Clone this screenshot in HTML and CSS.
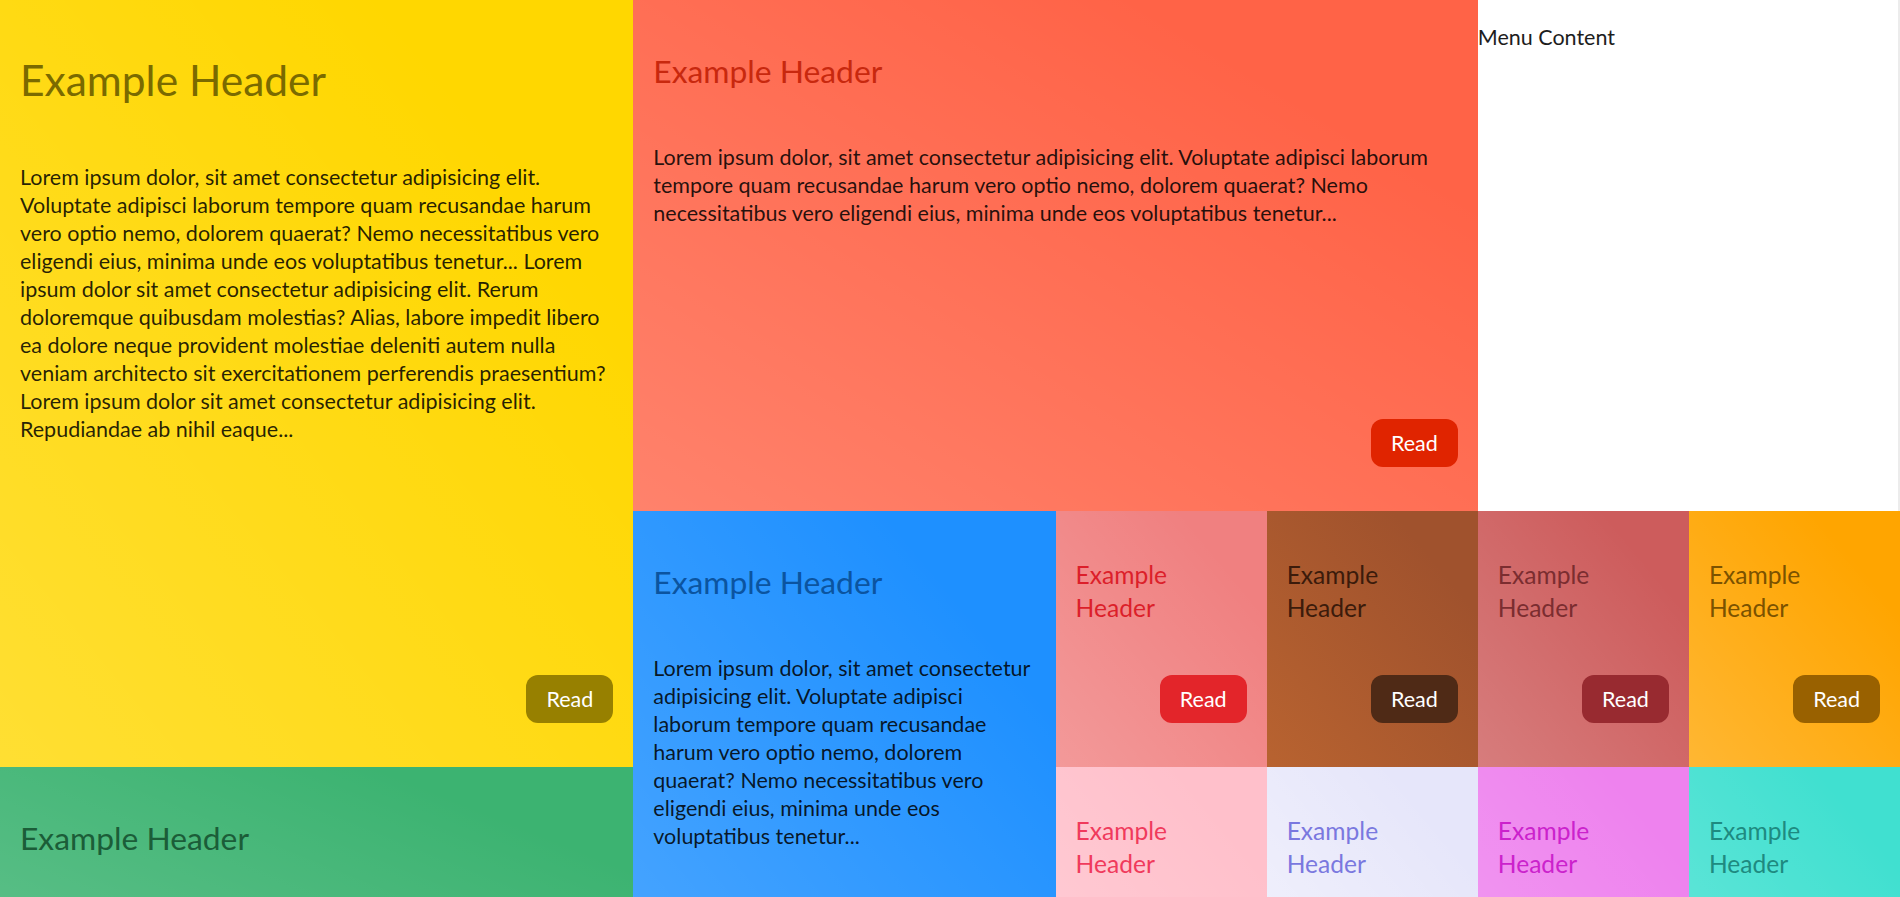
FILE: index.html
```html
<!DOCTYPE html>
<html lang="en">
<head>
<meta charset="utf-8">
<title>Bento Grid</title>
<link rel="stylesheet" href="styles.css">
</head>
<body>
<main class="grid">
  <article class="card card-gold span-big">
    <h1 class="title-xl">Example Header</h1>
    <p class="text">Lorem ipsum dolor, sit amet consectetur adipisicing elit. Voluptate adipisci laborum tempore quam recusandae harum vero optio nemo, dolorem quaerat? Nemo necessitatibus vero eligendi eius, minima unde eos voluptatibus tenetur... Lorem ipsum dolor sit amet consectetur adipisicing elit. Rerum doloremque quibusdam molestias? Alias, labore impedit libero ea dolore neque provident molestiae deleniti autem nulla veniam architecto sit exercitationem perferendis praesentium? Lorem ipsum dolor sit amet consectetur adipisicing elit. Repudiandae ab nihil eaque...</p>
    <button class="btn btn-gold">Read</button>
  </article>

  <article class="card card-tomato span-wide">
    <h2 class="title-lg">Example Header</h2>
    <p class="text">Lorem ipsum dolor, sit amet consectetur adipisicing elit. Voluptate adipisci laborum tempore quam recusandae harum vero optio nemo, dolorem quaerat? Nemo necessitatibus vero eligendi eius, minima unde eos voluptatibus tenetur...</p>
    <button class="btn btn-tomato">Read</button>
  </article>

  <aside class="menu span-menu">
    <p class="menu-text">Menu Content</p>
  </aside>

  <article class="card card-blue span-tall">
    <h2 class="title-lg">Example Header</h2>
    <p class="text">Lorem ipsum dolor, sit amet consectetur adipisicing elit. Voluptate adipisci laborum tempore quam recusandae harum vero optio nemo, dolorem quaerat? Nemo necessitatibus vero eligendi eius, minima unde eos voluptatibus tenetur...</p>
    <button class="btn btn-blue">Read</button>
  </article>

  <article class="card card-lightcoral">
    <h3 class="title-sm">Example Header</h3>
    <button class="btn btn-lightcoral">Read</button>
  </article>
  <article class="card card-sienna">
    <h3 class="title-sm">Example Header</h3>
    <button class="btn btn-sienna">Read</button>
  </article>
  <article class="card card-indianred">
    <h3 class="title-sm">Example Header</h3>
    <button class="btn btn-indianred">Read</button>
  </article>
  <article class="card card-orange">
    <h3 class="title-sm">Example Header</h3>
    <button class="btn btn-orange">Read</button>
  </article>

  <article class="card card-green span-green">
    <h2 class="title-lg">Example Header</h2>
    <button class="btn btn-green">Read</button>
  </article>

  <article class="card card-pink">
    <h3 class="title-sm">Example Header</h3>
    <button class="btn btn-pink">Read</button>
  </article>
  <article class="card card-lavender">
    <h3 class="title-sm">Example Header</h3>
    <button class="btn btn-lavender">Read</button>
  </article>
  <article class="card card-violet">
    <h3 class="title-sm">Example Header</h3>
    <button class="btn btn-violet">Read</button>
  </article>
  <article class="card card-turquoise">
    <h3 class="title-sm">Example Header</h3>
    <button class="btn btn-turquoise">Read</button>
  </article>
</main>
</body>
</html>
```
FILE: styles.css
```css
* { box-sizing: border-box; }

html, body {
  margin: 0;
  padding: 0;
  background: #ffffff;
}

body {
  font-family: Lato, "Open Sans", sans-serif;
  font-size: 21.5px;
  line-height: 28px;
  color: #1d1d1d;
}

.grid {
  display: grid;
  grid-template-columns: repeat(9, 1fr);
  grid-auto-rows: 255.5px;
  width: 100%;
}

.span-big   { grid-column: 1 / 4; grid-row: 1 / 4; }
.span-wide  { grid-column: 4 / 8; grid-row: 1 / 3; }
.span-menu  { grid-column: 8 / 10; grid-row: 1 / 3; }
.span-tall  { grid-column: 4 / 6; grid-row: 3 / 5; }
.span-green { grid-column: 1 / 4; grid-row: 4 / 5; }

.card {
  display: flex;
  flex-direction: column;
  padding: 24px 20px;
  overflow: hidden;
  background-image: linear-gradient(to top right, var(--light), rgba(255,255,255,0) 80%);
  --light: rgba(255,255,255,0.2);
}

.title-xl {
  font-size: 42.5px;
  line-height: 56px;
  font-weight: 400;
  margin: 28px 0 55px;
}

.title-lg {
  font-size: 31.8px;
  line-height: 42px;
  font-weight: 400;
  margin: 26px 0 51px;
}

.title-sm {
  font-size: 24.6px;
  line-height: 33px;
  font-weight: 400;
  margin: 23px 0 0;
  max-width: 110px;
}

.text {
  margin: 0;
  color: rgba(0, 0, 0, 0.86);
}

.btn {
  margin-top: auto;
  margin-bottom: 20px;
  align-self: flex-end;
  border: none;
  border-radius: 12px;
  padding: 10px 20px;
  font-family: inherit;
  font-size: 21.5px;
  line-height: 28px;
  color: #ffffff;
  cursor: pointer;
}

.menu {
  background: #ffffff;
  border-right: 2px solid #ececec;
}

.menu-text {
  margin: 23px 0 0;
  color: #1d1d1d;
}

/* colour themes */
.card-gold { background-color: #ffd700; }
.card-gold .title-xl { color: #7a6a00; }
.btn-gold { background: #978000; }

.card-tomato { background-color: #ff6347; }
.card-tomato .title-lg { color: #c8280e; }
.btn-tomato { background: #e02400; }

.card-blue { background-color: #1e90ff; }
.card-blue .title-lg { color: #0b54a0; }
.btn-blue { background: #0b5fb8; }

.card-green { background-color: #3cb371; }
.card-green .title-lg { color: #1b5d38; }
.btn-green { background: #1f7a48; }

.card-lightcoral { background-color: #f08080; }
.card-lightcoral .title-sm { color: #dc1f2a; }
.btn-lightcoral { background: #e3252a; }

.card-sienna { background-color: #a0522d; --light: rgba(200,110,50,0.6); }
.card-sienna .title-sm { color: #3b1b0b; }
.btn-sienna { background: #4f2a16; }

.card-indianred { background-color: #cd5c5c; }
.card-indianred .title-sm { color: #7b2d30; }
.btn-indianred { background: #982a30; }

.card-orange { background-color: #ffa500; }
.card-orange .title-sm { color: #7b5200; }
.btn-orange { background: #996100; }

.card-pink { background-color: #ffc0cb; }
.card-pink .title-sm { color: #f03a5c; }
.btn-pink { background: #e8365a; }

.card-lavender { background-color: #e6e6fa; --light: rgba(255,255,255,0.5); }
.card-lavender .title-sm { color: #7a78df; }
.btn-lavender { background: #6a68d0; }

.card-violet { background-color: #ee82ee; }
.card-violet .title-sm { color: #cb22cc; }
.btn-violet { background: #b020b0; }

.card-turquoise { background-color: #40e0d0; }
.card-turquoise .title-sm { color: #1e8a80; }
.btn-turquoise { background: #1e8a80; }
```
